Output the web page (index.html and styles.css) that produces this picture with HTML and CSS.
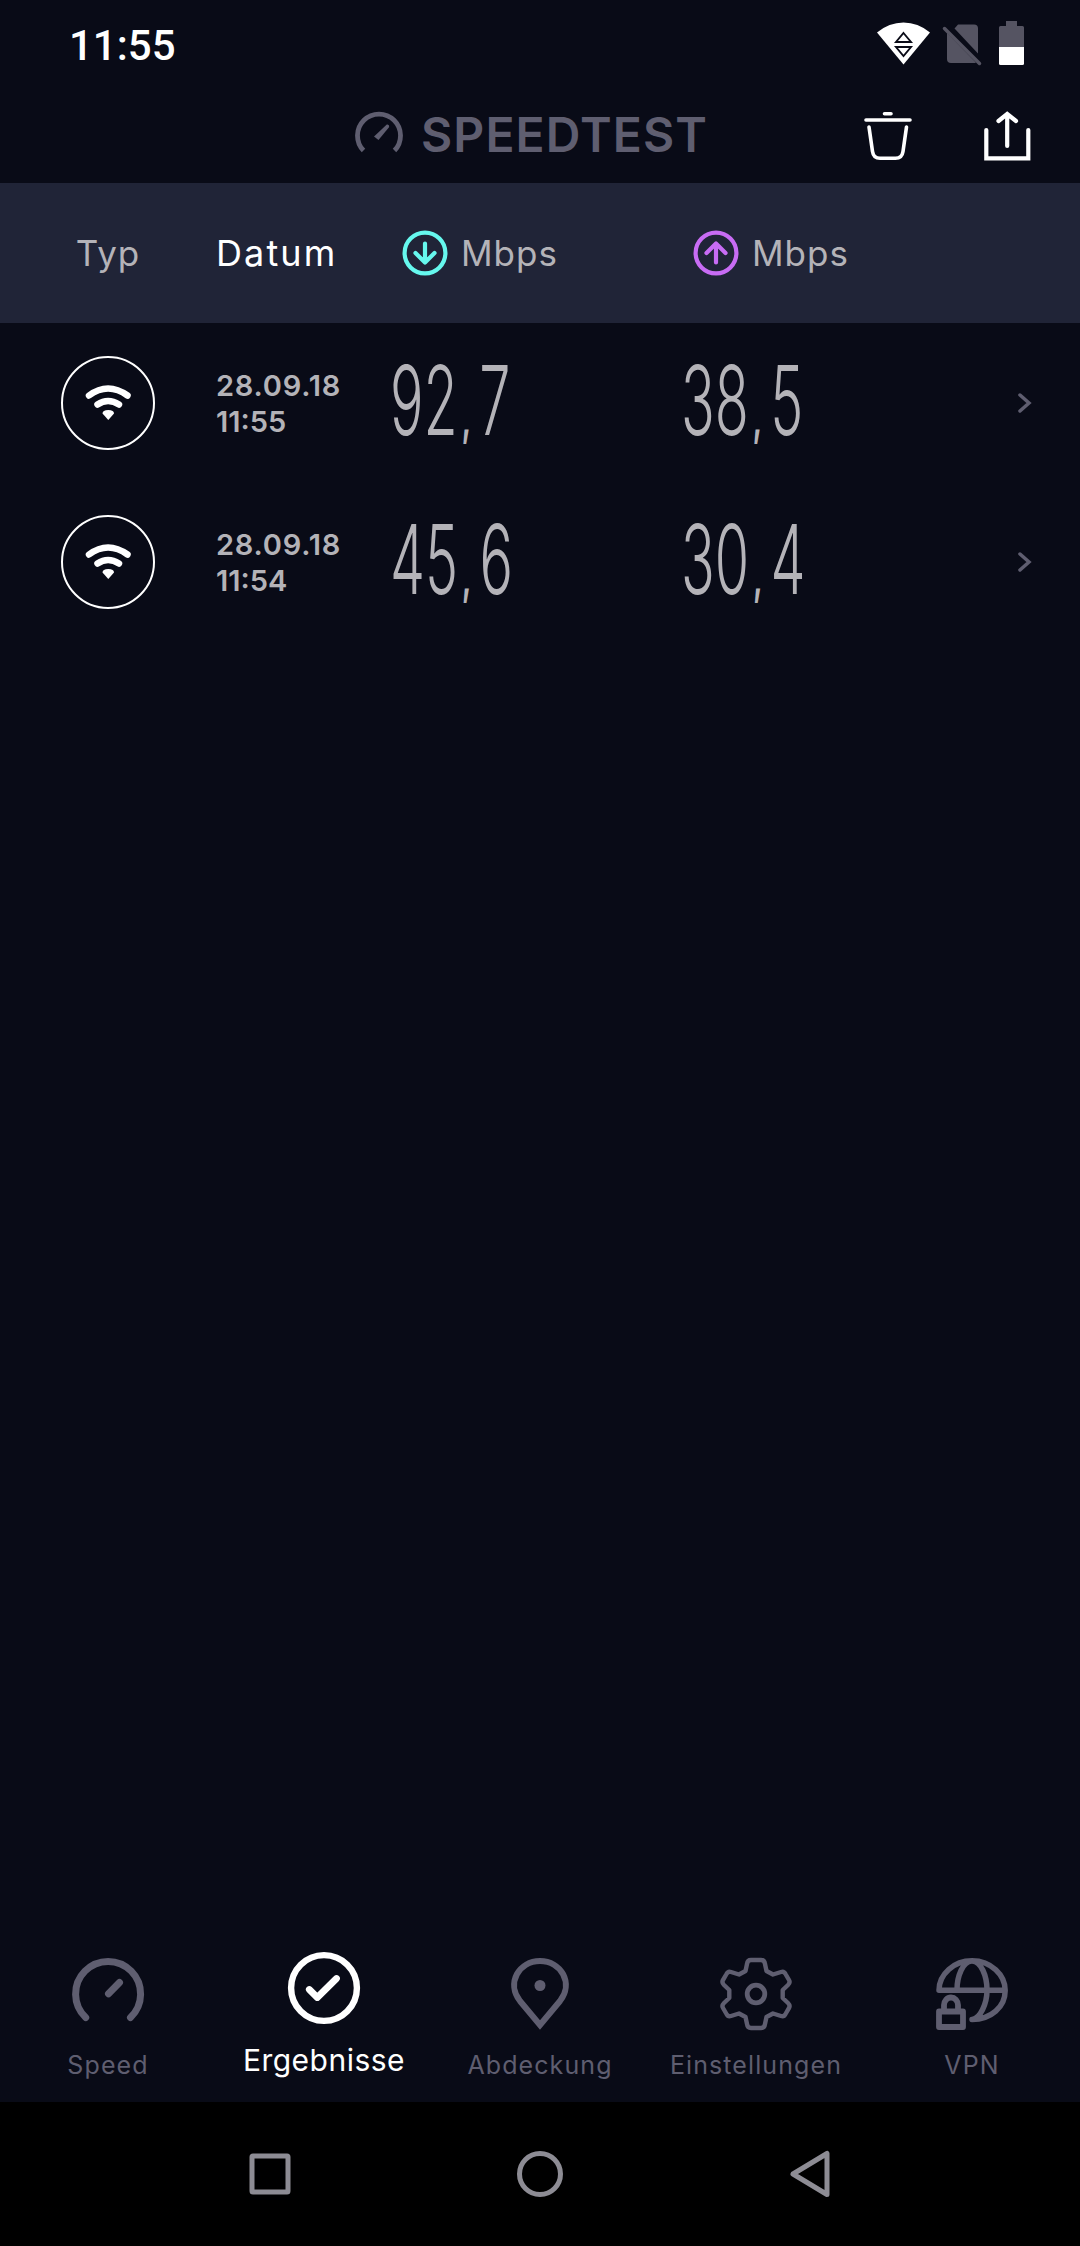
FILE: index.html
```html
<!DOCTYPE html>
<html lang="de">
<head>
  <meta charset="UTF-8">
  <meta name="viewport" content="width=device-width, initial-scale=1.0">
  <title>Speedtest - Ergebnisse</title>
  <link rel="stylesheet" href="styles.css">
</head>
<body>
  <div class="screen">
    <div class="status-bar">
      <span class="clock">11:55</span>
      <svg class="status-icons" width="150" height="48" viewBox="876 20 150 48">
        <!-- wifi -->
        <path d="M877 32.500Q889 22.500 903.500 22.500T930 32.500L903.500 64.500Z" fill="#fff"/>
        <path d="M903.500 33L911 42H896ZM896 47H911L903.500 56Z" fill="#fff" stroke="#0a0b17" stroke-width="1.900"/>
        <!-- no sim -->
        <path d="M954.500 28.500L958 24.500H974Q978 24.500 978 28.500V53.500Z" fill="#555462"/>
        <path d="M947 33L976 62.500Q975 63 974 63H951Q947 63 947 59Z" fill="#555462"/>
        <path d="M944.500 28.500L979.500 63.500" stroke="#555462" stroke-width="3.500" stroke-linecap="round"/>
        <!-- battery -->
        <path d="M1006 21H1017V26H1022.500Q1024 26 1024 27.500V47H999V27.500Q999 26 1000.500 26H1006Z" fill="#555462"/>
        <path d="M999 47H1024V63.500Q1024 65 1022.500 65H1000.500Q999 65 999 63.500Z" fill="#fff"/>
      </svg>
    </div>

    <div class="app-bar">
      <div class="logo">
        <svg width="48" height="44" viewBox="0 0 48 44">
          <path d="M8.500 39.500A21.500 21.500 0 1 1 39.500 39.500" fill="none" stroke="#5f5e70" stroke-width="4.800"/>
          <path d="M19 25.500L31.800 13.500Q34.500 13 34.200 16L23.500 29Z" fill="#5f5e70"/>
        </svg>
        <span class="logo-text">SPEEDTEST</span>
      </div>
      <div class="actions">
        <svg width="50" height="50" viewBox="863 110 50 50">
          <path d="M884.500 112.700H891M866 119H910M869 126L872.500 150.500Q873.500 157.300 880 157.300H895.500Q902 157.300 903 150.500L906.500 126" class="line"/>
        </svg>
        <svg width="50" height="50" viewBox="982 110 50 50">
          <path d="M986.300 129V157.300H1028.300V129M1007.200 145V113.500M998.500 120L1007.200 113L1016 120" class="line share" />
        </svg>
      </div>
    </div>

    <div class="table-head">
      <span class="col-type">Typ</span>
      <span class="col-date active">Datum</span>
      <span class="col-speed">
        <svg class="down" width="46" height="46" viewBox="0 0 46 46">
          <circle cx="23" cy="23" r="20.400"/>
          <path d="M23 13.500V32M13.500 23L23 32.500L32.500 23"/>
        </svg>
        <span class="unit">Mbps</span>
      </span>
      <span class="col-speed">
        <svg class="up" width="46" height="46" viewBox="0 0 46 46">
          <circle cx="23" cy="23" r="20.400"/>
          <path d="M23 32.500V14M13.500 23L23 13.500L32.500 23"/>
        </svg>
        <span class="unit">Mbps</span>
      </span>
    </div>

    <div class="results">
      <div class="result">
        <div class="col-type">
          <svg class="wifi" width="94" height="94" viewBox="0 0 94 94">
            <circle cx="47" cy="47" r="46"/>
            <path d="M28 39.500Q47 25.500 66.500 39.500M36.500 48.500Q47 41.500 58 48.500"/>
            <path class="dot" d="M41.500 57.500Q41.500 54 47.300 54T53 57.500L47.300 64Z"/>
          </svg>
        </div>
        <div class="col-date"><span class="day">28.09.18</span><br>11:55</div>
        <div class="col-speed"><span class="value">92<span class="comma">,</span>7</span></div>
        <div class="col-speed"><span class="value">38<span class="comma">,</span>5</span></div>
        <svg class="chevron" width="16" height="22" viewBox="0 0 16 22"><path d="M2 3L11 11L2 19"/></svg>
      </div>
      <div class="result">
        <div class="col-type">
          <svg class="wifi" width="94" height="94" viewBox="0 0 94 94">
            <circle cx="47" cy="47" r="46"/>
            <path d="M28 39.500Q47 25.500 66.500 39.500M36.500 48.500Q47 41.500 58 48.500"/>
            <path class="dot" d="M41.500 57.500Q41.500 54 47.300 54T53 57.500L47.300 64Z"/>
          </svg>
        </div>
        <div class="col-date"><span class="day">28.09.18</span><br>11:54</div>
        <div class="col-speed"><span class="value">45<span class="comma">,</span>6</span></div>
        <div class="col-speed"><span class="value">30<span class="comma">,</span>4</span></div>
        <svg class="chevron" width="16" height="22" viewBox="0 0 16 22"><path d="M2 3L11 11L2 19"/></svg>
      </div>
    </div>

    <div class="tabs">
      <div class="tab">
        <svg width="76" height="76" viewBox="-38 -38 76 76">
          <path d="M-22.300 23.500A32.500 32.500 0 1 1 22.500 23.500M.5 -.3L11.500 -11.500" stroke-width="7"/>
        </svg>
        <span>Speed</span>
      </div>
      <div class="tab active">
        <svg width="76" height="76" viewBox="-38 -38 76 76">
          <circle r="32.900" stroke-width="6.400"/>
          <path d="M-14.700 1.500L-6.700 9.500L12.500 -9.500" stroke-width="6.800"/>
        </svg>
        <span>Ergebnisse</span>
      </div>
      <div class="tab">
        <svg width="76" height="76" viewBox="-38 -38 76 76">
          <path class="pin" d="M0 31L-20 7C-34 -11 -21 -33 0 -33S34 -11 20 7Z" stroke-width="6"/>
          <circle class="solid" cy="-8.500" r="5.500"/>
        </svg>
        <span>Abdeckung</span>
      </div>
      <div class="tab">
        <svg width="76" height="76" viewBox="-38 -38 76 76">
          <path d="M-5 -34H5Q8.500 -34 9 -30L10.500 -23L17 -19.500L25 -22Q28 -23 29.500 -20L33 -14Q34.500 -11.500 32 -9L26.700 -4V4L32 9Q34.500 11.500 33 14L29.500 20Q28 23 25 22L17 19.500L10.500 23L9 30Q8.500 34 5 34H-5Q-8.500 34 -9 30L-10.500 23L-17 19.500L-25 22Q-28 23 -29.500 20L-33 14Q-34.500 11.500 -32 9L-26.700 4V-4L-32 -9Q-34.500 -11.500 -33 -14L-29.500 -20Q-28 -23 -25 -22L-17 -19.500L-10.500 -23L-9 -30Q-8.500 -34 -5 -34Z" stroke-width="4.400"/>
          <circle r="8.800" stroke-width="4.800"/>
        </svg>
        <span>Einstellungen</span>
      </div>
      <div class="tab">
        <svg width="76" height="76" viewBox="-38 -38 76 76">
          <path d="M-33 -3.700C-33 -20 -18 -33.200 0 -33.200C19 -33.200 33.200 -19 33.200 -3.500C33.200 13 19 25.500 0 25.500M-33 -3.700H33M-15 -4C-15 -18 -9 -33 0 -33S15 -18 15 -4C15 10 8 25 0 25.500" stroke-width="5.500"/>
          <path d="M-33 17.500H-9V33H-33ZM-28 17V11A7 7.500 0 0 1 -14 11V17" stroke-width="5.800"/>
        </svg>
        <span>VPN</span>
      </div>
    </div>

    <div class="system-nav">
      <svg width="50" height="50" viewBox="-25 -25 50 50"><rect x="-18" y="-18" width="36" height="36" rx="1"/></svg>
      <svg width="50" height="50" viewBox="-25 -25 50 50"><circle r="20.500"/></svg>
      <svg width="50" height="50" viewBox="-25 -25 50 50"><path d="M-17 0L17 -20.500V20.500Z"/></svg>
    </div>
  </div>
</body>
</html>
```
FILE: styles.css
```css
* {
  margin: 0;
  padding: 0;
  box-sizing: border-box;
}

body {
  background: #090b17;
  font-family: Inter, 'Open Sans', sans-serif;
  color: #b4b3b8;
}

svg {
  display: block;
  flex-shrink: 0;
}

.screen {
  width: 1080px;
  height: 2246px;
  display: flex;
  flex-direction: column;
  overflow: hidden;
}

/* Top bars */
.status-bar {
  height: 88px;
  padding: 0 54px 0 69px;
  display: flex;
  align-items: center;
  justify-content: space-between;
}

.clock {
  font-family: Roboto, sans-serif;
  font-size: 42px;
  font-weight: 500;
  color: #fff;
  padding-top: 2px;
}

.app-bar {
  height: 95px;
  padding: 0 48px 0 355px;
  display: flex;
  align-items: center;
  justify-content: space-between;
}

.logo {
  display: flex;
  align-items: center;
  gap: 18px;
  padding-bottom: 2px;
}

.logo svg {
  margin-bottom: 4px;
}

.logo-text {
  font-size: 48px;
  font-weight: 600;
  line-height: 48px;
  letter-spacing: 1.100px;
  color: #5f5e70;
}

.actions {
  display: flex;
  gap: 69px;
}

.line {
  fill: none;
  stroke: #fff;
  stroke-width: 3.600;
  stroke-linecap: round;
}

.line.share {
  stroke-width: 4.200;
}

/* Results table */
.table-head,
.result {
  display: grid;
  grid-template-columns: 216px 174px 291px 337px 16px;
  align-items: center;
}

.table-head {
  height: 140px;
  background: #202437;
  font-size: 35px;
  letter-spacing: 1px;
}

.col-type {
  display: flex;
  justify-content: center;
}

.table-head .active {
  color: #fff;
  font-size: 36px;
  letter-spacing: 2.100px;
}

.table-head .col-speed {
  display: flex;
  align-items: center;
  gap: 13px;
  padding-left: 12px;
}

.down,
.up {
  fill: none;
  stroke-width: 4.200;
  stroke-linecap: round;
  stroke-linejoin: round;
}

.down { stroke: #66f8ee; }
.up { stroke: #c86cf4; }

.result {
  height: 159px;
}

.result .col-date {
  font-size: 29px;
  font-weight: 600;
  line-height: 36px;
  padding-top: 2px;
}

.day {
  letter-spacing: 0.800px;
}

.wifi {
  fill: none;
  stroke: #fff;
  stroke-width: 6.500;
  stroke-linecap: round;
}

.wifi circle {
  stroke-width: 2;
}

.wifi .dot {
  fill: #fff;
  stroke: none;
}

.value {
  display: block;
  width: 200px;
  height: 100px;
  font-size: 96px;
  font-weight: 300;
  line-height: 94px;
  transform: scaleX(0.58);
  transform-origin: left;
  white-space: nowrap;
}

.comma {
  font-size: 48px;
  font-weight: 700;
  line-height: 1;
  padding: 0 14px 0 7px;
}

.chevron path {
  fill: none;
  stroke: #5f5e70;
  stroke-width: 3.500;
  stroke-linecap: round;
}

/* Bottom tabs */
.tabs {
  height: 164px;
  margin-top: auto;
  display: grid;
  grid-template-columns: repeat(5, 216px);
  color: #5f5e70;
}

.tab {
  display: flex;
  flex-direction: column;
  align-items: center;
  padding-top: 18px;
  gap: 17px;
  font-size: 25px;
  line-height: 32px;
  letter-spacing: 1.100px;
}

.tab.active {
  padding-top: 12px;
  gap: 18px;
  font-size: 30px;
  letter-spacing: 0.500px;
  color: #fff;
}

.tab svg {
  fill: none;
  stroke: currentColor;
  stroke-linecap: round;
  stroke-linejoin: round;
}

.tab .pin {
  stroke-linejoin: miter;
}

.tab .solid {
  fill: currentColor;
  stroke: none;
}

/* Android navigation */
.system-nav {
  height: 144px;
  background: #000;
  padding: 0 245px;
  display: flex;
  align-items: center;
  justify-content: space-between;
}

.system-nav svg {
  fill: none;
  stroke: #8d8c94;
  stroke-width: 5;
  stroke-linejoin: round;
}
```
